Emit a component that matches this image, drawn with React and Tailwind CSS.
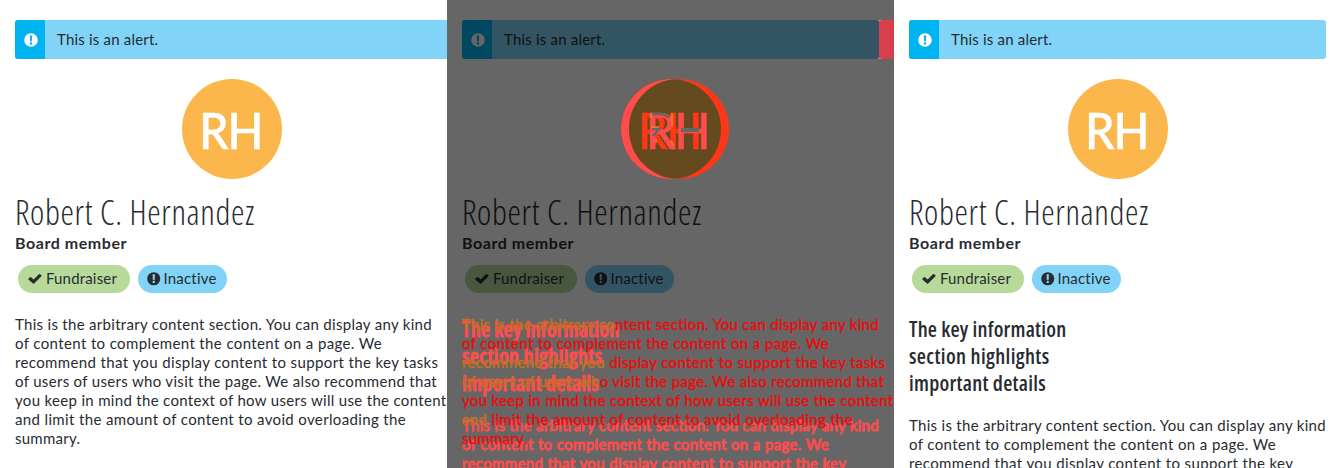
const BODY = [
  ["This is the arbitrary content section. You can display any kind", "tracking-[0.3px]", 24],
  ["of content to complement the content on a page. We", "tracking-[0.38px]", 0],
  ["recommend that you display content to support the key tasks", "tracking-[0.38px]", 18],
  ["of users of users who visit the page. We also recommend that", "tracking-[0.325px]", 20],
  ["you keep in mind the context of how users will use the content", "tracking-[0.32px]", 0],
  ["and limit the amount of content to avoid overloading the", "tracking-[0.36px]", 3],
  ["summary.", "tracking-[0.25px]", 0],
];

const BODY_SHORT = [
  BODY[0],
  BODY[1],
  ["recommend that you display content to support the key", "tracking-[0.38px]", 0],
];

const KEY_INFO = [
  ["The key information", "tracking-[0.2px]", 0],
  ["section highlights", "tracking-[0.36px]", 0],
  ["important details", "tracking-[0.26px]", 0],
];

function ExclamationCircle({ className }) {
  return (
    <svg viewBox="0 0 14 14" className={className} fill="currentColor">
      <path
        fillRule="evenodd"
        d="M7 .2a6.8 6.8 0 1 1 0 13.6A6.8 6.8 0 0 1 7 .2ZM5.8 2.7l.25 5.3q.03.3.35.3h1.2q.32 0 .35-.3l.25-5.3q0-.3-.3-.3H6.1q-.3 0-.3.3ZM6.2 9.2q-.3 0-.3.3v1.7q0 .3.3.3h1.6q.3 0 .3-.3V9.5q0-.3-.3-.3Z"
      />
    </svg>
  );
}

function Check({ className }) {
  return (
    <svg viewBox="0 0 14 12" className={className} fill="currentColor">
      <path d="M13.4 3.3 6.2 10.5a.9.9 0 0 1-1.2 0L.6 6.8a.8.8 0 0 1 0-1.2L1.9 4.3a.8.8 0 0 1 1.2 0L5.6 6.6 10.9 1.3a.8.8 0 0 1 1.2 0l1.3 1a.7.7 0 0 1 0 1Z" />
    </svg>
  );
}

function Alert({ className }) {
  return (
    <div className={`flex h-[39px] items-stretch overflow-hidden bg-[#81d4f7] ${className}`}>
      <div className="flex w-[30px] items-center justify-center bg-[#00b4f1] pl-px text-white">
        <ExclamationCircle className="size-[14px]" />
      </div>
      <div className="pt-[10px] pl-[12px] text-[15px] leading-[19px] tracking-[0.2px]">This is an alert.</div>
    </div>
  );
}

function Initials({ className }) {
  return (
    <div
      className={`flex h-[100px] w-[100px] items-center justify-center rounded-full pr-[2px] text-[50px] leading-[60px] font-medium tracking-[-1.2px] ${className}`}
    >
      <span className="inline-block scale-x-[0.94] pt-[2px] [-webkit-text-stroke:0.5px_currentColor]">RH</span>
    </div>
  );
}

function Identity() {
  return (
    <>
      <h1 className="mt-[13px] h-[40px] font-['Open_Sans',sans-serif] text-[34px] leading-[40px] font-[340] tracking-[0.64px] whitespace-nowrap [font-stretch:75%]">
        Robert C. Hernandez
      </h1>
      <div className="mt-px text-[16px] leading-[19px] font-bold tracking-[0.55px]">Board member</div>
      <div className="mt-[13px] ml-[3px] flex gap-2 text-[15px] leading-[26px]">
        <div className="flex h-7 w-[112px] items-start rounded-full bg-[#b7da9b] pl-[10px]">
          <Check className="mt-[8px] mr-[4px] h-[12px] w-[14px]" />
          <span className="tracking-[0.17px]">Fundraiser</span>
        </div>
        <div className="flex h-7 w-[89px] items-start rounded-full bg-[#81d4f7] pl-[9px]">
          <ExclamationCircle className="mt-[7px] mr-[3px] size-[13.5px]" />
          <span className="tracking-[0.2px]">Inactive</span>
        </div>
      </div>
    </>
  );
}

function Lines({ lines, className, markOverlap }) {
  return (
    <div className={`whitespace-nowrap ${className}`}>
      {lines.map(([text, tracking, overlap]) => (
        <div key={text} className={tracking}>
          {markOverlap && overlap > 0 ? (
            <>
              <span className="text-[#c0741f]">{text.slice(0, overlap)}</span>
              {text.slice(overlap)}
            </>
          ) : (
            text
          )}
        </div>
      ))}
    </div>
  );
}

function Summary({ lines, wide, keyInfo }) {
  return (
    <div className="h-[468px] w-[447px] overflow-hidden bg-white pt-5 pl-[15px]">
      <Alert className={wide ? "w-[432px] rounded-l-[3px]" : "w-[417px] rounded-[3px]"} />
      <div className={wide ? "mt-5 pl-[167px]" : "mt-5 pl-[159px]"}>
        <Initials className="bg-[#fbb74b] text-white" />
      </div>
      <Identity />
      {keyInfo && (
        <Lines
          lines={KEY_INFO}
          className="mt-[23px] font-['Open_Sans',sans-serif] text-[21px] leading-[27px] font-semibold [font-stretch:75%]"
        />
      )}
      {lines && (
        <Lines
          lines={lines}
          className={keyInfo ? "mt-[19px] text-[15px] leading-[19px]" : "mt-[22px] text-[15px] leading-[19px]"}
        />
      )}
    </div>
  );
}

function Difference() {
  return (
    <div className="relative h-[468px] w-[447px] overflow-hidden">
      <Summary />
      <div className="absolute inset-0 bg-black/60" />
      <div className="absolute top-5 left-[432px] h-[39px] w-[15px] bg-[#d93f4b]" />
      <div className="absolute top-5 left-[431px] h-px w-[3px] bg-[#c9903f]" />
      <div className="absolute top-[58px] left-[431px] h-px w-[3px] bg-[#c9903f]" />
      <div className="absolute top-[79px] left-[174px] size-[100px] rounded-full bg-[#ff4d4d]" />
      <div className="absolute top-[79px] left-[182px] size-[100px] overflow-hidden rounded-full bg-[#ff3719]">
        <div className="absolute top-0 left-[-8px] size-[100px] rounded-full bg-[#644a1e]" />
      </div>
      <Initials className="absolute top-[79px] left-[174px] text-[#ff3719]" />
      <Initials className="absolute top-[79px] left-[182px] text-[#ff4d4d]" />
      <div className="absolute top-[128px] left-[234px] h-[4px] w-[18px] bg-[#666666]" />
      <svg viewBox="0 0 26 36" className="absolute top-[112px] left-[203px] h-[36px] w-[26px]" fill="none">
        <path d="M2 2h10l7 3M2 17h7l-6 7" stroke="#666" strokeWidth="2.5" />
        <path d="M1 1v5M22 1v14M1 15h8M6 27v4M21 29l3 5" stroke="#dc8a30" strokeWidth="1.5" />
      </svg>
      <div className="absolute top-[316px] left-[15px] text-[#ff4d4d] [-webkit-text-stroke:0.9px_#ff4d4d]">
        <Lines
          lines={KEY_INFO}
          className="font-['Open_Sans',sans-serif] text-[21px] leading-[27px] font-semibold [font-stretch:75%]"
        />
        <Lines lines={BODY_SHORT} className="mt-[19px] text-[15px] leading-[19px]" />
      </div>
      <Lines
        markOverlap
        lines={BODY}
        className="absolute top-[315px] left-[15px] text-[15px] leading-[19px] text-[#ea0c0c] [-webkit-text-stroke:0.4px_currentColor]"
      />
    </div>
  );
}

export default function App() {
  return (
    <main className="flex h-[468px] w-[1341px] overflow-hidden bg-white font-['Lato',sans-serif] text-[#282b31]">
      <Summary wide lines={BODY} />
      <Difference />
      <Summary keyInfo lines={BODY_SHORT} />
    </main>
  );
}
